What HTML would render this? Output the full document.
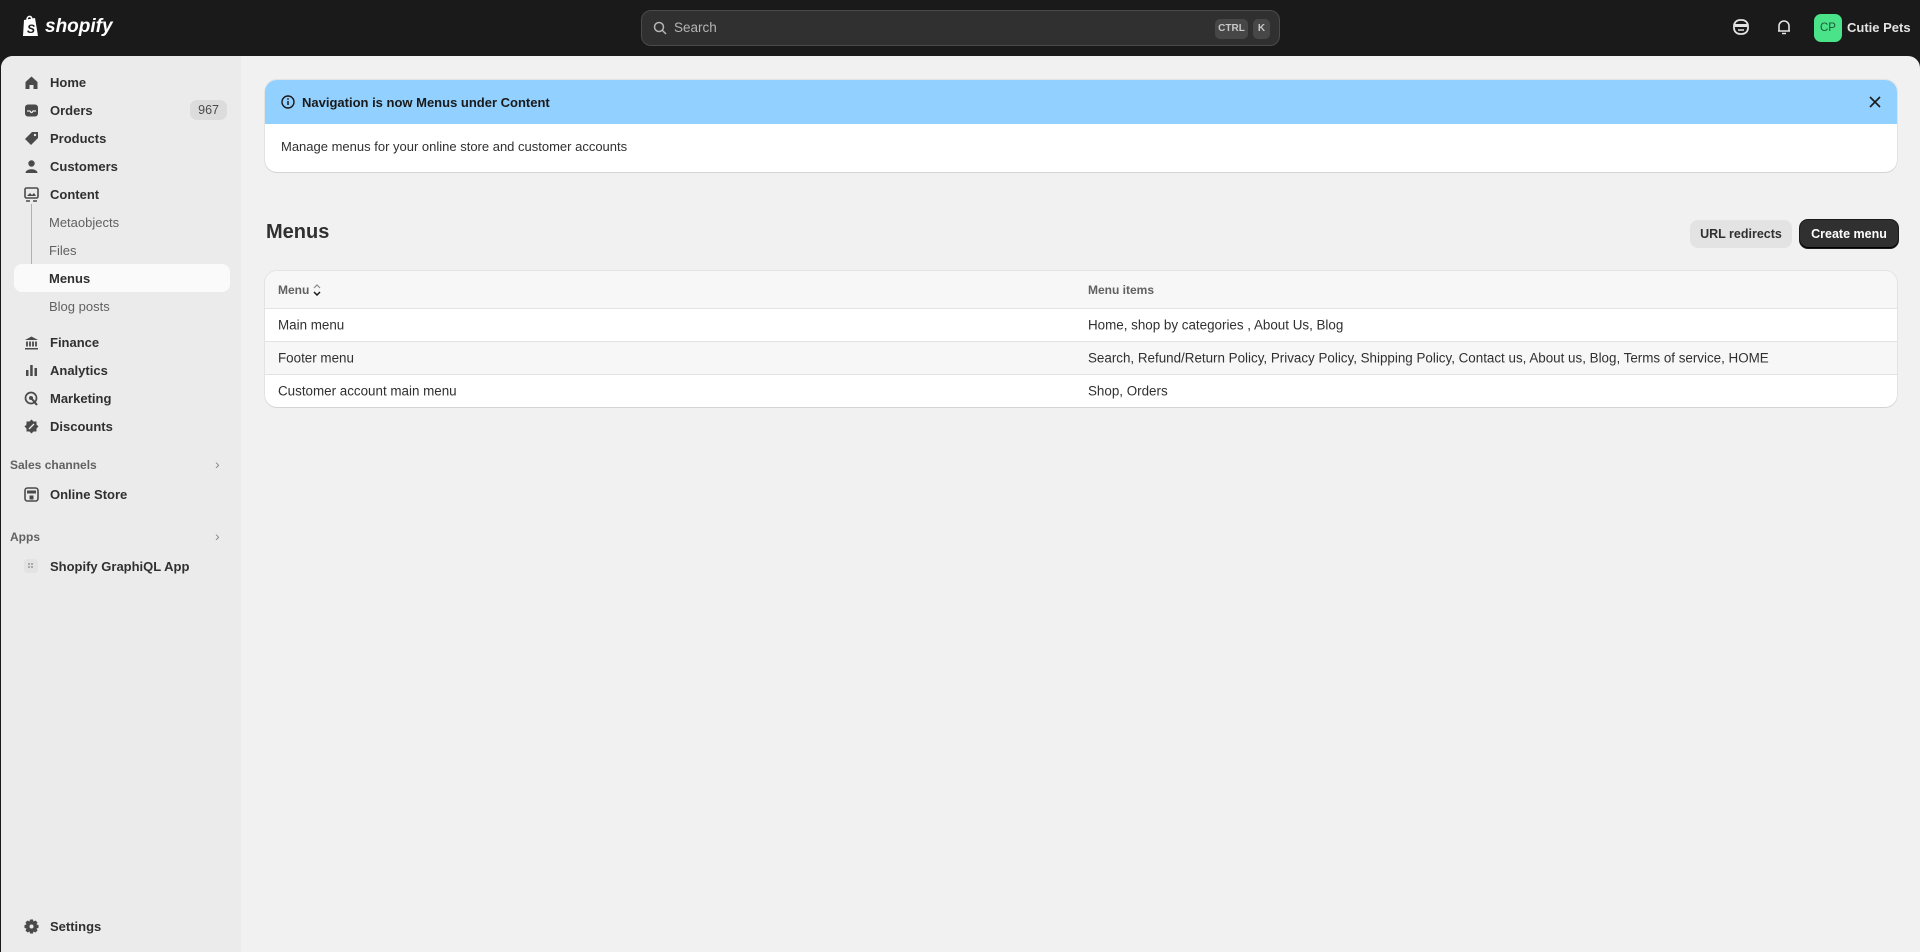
<!DOCTYPE html>
<html><head><meta charset="utf-8"><style>
*{box-sizing:border-box;margin:0;padding:0}
body{width:1920px;height:952px;overflow:hidden;background:#1a1a1a;font-family:"Liberation Sans",sans-serif;font-size:13px;color:#303030;position:relative}
.top{position:absolute;left:0;top:0;width:1920px;height:56px;background:#1a1a1a}
.logo{position:absolute;left:21px;top:15px;color:#fff;font-weight:bold;font-style:italic;font-size:19px;display:flex;align-items:center;gap:4px}
.search{position:absolute;left:641px;top:10px;width:639px;height:36px;background:#303030;border:1px solid #4a4a4a;border-radius:10px;color:#b5b5b5;font-size:13.5px}
.search .t{position:absolute;left:32px;top:9px}
.kbd{position:absolute;top:8px;height:20px;background:#474747;border-radius:5px;color:#c8c8c8;font-size:10px;font-weight:bold;line-height:20px;text-align:center}
.frame{position:absolute;left:1px;top:56px;width:1919px;height:896px;background:#f1f1f1;border-radius:12px 12px 0 0;overflow:hidden}
.side{position:absolute;left:0;top:0;width:240px;height:896px;background:#ebebeb}
.nav{position:absolute;left:13px;width:216px;height:28px;display:flex;align-items:center;font-weight:bold;color:#303030}
.nav .ic{width:16px;height:16px;margin-left:9px;margin-right:11px;display:flex;align-items:center;justify-content:center}
.sub{position:absolute;left:48px;color:#616161;font-weight:normal}
.sec{position:absolute;left:9px;color:#616161;font-weight:bold;font-size:12px}
.chev{position:absolute;left:214px;color:#8a8a8a;font-size:14px}
.card{position:absolute;background:#fff;border-radius:12px;box-shadow:0 1px 0 #d4d4d4,0 0 0 1px #e3e3e3;overflow:hidden}
.row{position:absolute;left:0;width:1632px;border-top:1px solid #e3e3e3;font-size:13.4px}
.row span{position:absolute;top:50%;transform:translateY(-50%)}
</style></head><body>
<div class="top">
 <div class="logo"><svg width="20" height="23" viewBox="0 0 20 23"><path d="M3 5 L14 3 L17 21 L2 21 Z" fill="#fff"/><path d="M6 5 C6 1 10 0 11 4" stroke="#fff" stroke-width="1.5" fill="none"/><text x="6" y="18" font-size="12" font-weight="bold" fill="#1a1a1a" font-family="Liberation Sans">S</text></svg>shopify</div>
 <div class="search"><svg style="position:absolute;left:11px;top:10px" width="14" height="14" viewBox="0 0 14 14"><circle cx="6" cy="6" r="4.5" stroke="#b5b5b5" stroke-width="1.5" fill="none"/><path d="M9.5 9.5 L13 13" stroke="#b5b5b5" stroke-width="1.5"/></svg><span class="t">Search</span><span class="kbd" style="left:573px;width:33px">CTRL</span><span class="kbd" style="left:611px;width:17px">K</span></div>
 <svg style="position:absolute;left:1732px;top:18px" width="18" height="18" viewBox="0 0 18 18"><rect x="2" y="2" width="14" height="14" rx="6" fill="none" stroke="#e3e3e3" stroke-width="1.8"/><rect x="3" y="6" width="12" height="3" fill="#e3e3e3"/><path d="M6 12 h6" stroke="#e3e3e3" stroke-width="1.5"/></svg>
 <svg style="position:absolute;left:1775px;top:18px" width="18" height="18" viewBox="0 0 18 18"><path d="M4 13 V8 a5 5 0 0 1 10 0 V13 Z M3 13 h12 M7 15.5 h4" fill="none" stroke="#e3e3e3" stroke-width="1.6" stroke-linejoin="round"/></svg>
 <div style="position:absolute;left:1814px;top:14px;width:28px;height:28px;border-radius:7px;background:#4be38a;color:#1a5a35;font-size:11.5px;line-height:28px;text-align:center">CP</div>
 <div style="position:absolute;left:1847px;top:20px;color:#e3e3e3;font-weight:bold;font-size:13px">Cutie Pets</div>
</div>
<div class="frame">
 <div class="side">
  <div class="nav" style="top:12px"><span class="ic"><svg width="15" height="15" viewBox="0 0 15 15"><path d="M1.5 7 L7.5 1.5 L13.5 7 V14 H9.5 V10 H5.5 V14 H1.5Z" fill="#4a4a4a"/></svg></span>Home</div>
  <div class="nav" style="top:40px"><span class="ic"><svg width="15" height="15" viewBox="0 0 15 15"><rect x="1" y="1.5" width="13" height="12" rx="3" fill="#4a4a4a"/><path d="M3 8 h3 l1 1.5 h1 l1 -1.5 h3" stroke="#ebebeb" stroke-width="1.3" fill="none"/></svg></span>Orders<span style="position:absolute;right:3px;background:#dcdcdc;border-radius:7px;padding:3px 8px;font-weight:normal;color:#4a4a4a;font-size:12.5px">967</span></div>
  <div class="nav" style="top:68px"><span class="ic"><svg width="15" height="15" viewBox="0 0 15 15"><path d="M8 1 H14 V7 L7 14 L1 8 Z" fill="#4a4a4a"/><circle cx="11" cy="4" r="1.2" fill="#ebebeb"/></svg></span>Products</div>
  <div class="nav" style="top:96px"><span class="ic"><svg width="15" height="15" viewBox="0 0 15 15"><circle cx="7.5" cy="4.5" r="3.2" fill="#4a4a4a"/><path d="M1.5 14 C1.5 9 13.5 9 13.5 14Z" fill="#4a4a4a"/></svg></span>Customers</div>
  <div class="nav" style="top:124px"><span class="ic"><svg width="15" height="15" viewBox="0 0 15 15"><rect x="1" y="1" width="13" height="10" rx="1.5" fill="none" stroke="#4a4a4a" stroke-width="1.6"/><path d="M3 9 L6 6 L8 8 L10 6 L12 9Z" fill="#4a4a4a"/><path d="M2 14 h4 M9 14 h4" stroke="#4a4a4a" stroke-width="1.5"/></svg></span>Content</div>
  <div style="position:absolute;left:30px;top:148px;width:1px;height:70px;background:#b0b0b0"></div>
  <div style="position:absolute;left:30px;top:218px;width:8px;height:1px;background:#b0b0b0"></div>
  <div class="sub" style="top:159px">Metaobjects</div>
  <div class="sub" style="top:187px">Files</div>
  <div style="position:absolute;left:13px;top:208px;width:216px;height:28px;background:#fafafa;border-radius:8px"></div>
  <div class="sub" style="top:215px;color:#303030;font-weight:bold">Menus</div>
  <div class="sub" style="top:243px">Blog posts</div>
  <div class="nav" style="top:272px"><span class="ic"><svg width="15" height="15" viewBox="0 0 15 15"><path d="M1 5 L7.5 1.5 L14 5Z M1 13 h13 v1.5 h-13Z" fill="#4a4a4a"/><path d="M3 6.5 v5 M6 6.5 v5 M9 6.5 v5 M12 6.5 v5" stroke="#4a4a4a" stroke-width="1.8"/></svg></span>Finance</div>
  <div class="nav" style="top:300px"><span class="ic"><svg width="15" height="15" viewBox="0 0 15 15"><rect x="2" y="7" width="2.5" height="6" fill="#4a4a4a"/><rect x="6.2" y="2" width="2.5" height="11" fill="#4a4a4a"/><rect x="10.5" y="5" width="2.5" height="8" fill="#4a4a4a"/></svg></span>Analytics</div>
  <div class="nav" style="top:328px"><span class="ic"><svg width="15" height="15" viewBox="0 0 15 15"><circle cx="7" cy="7" r="5.5" fill="none" stroke="#4a4a4a" stroke-width="1.7"/><circle cx="7" cy="7" r="2" fill="#4a4a4a"/><path d="M8 8 L13 14" stroke="#4a4a4a" stroke-width="2"/></svg></span>Marketing</div>
  <div class="nav" style="top:356px"><span class="ic"><svg width="15" height="15" viewBox="0 0 15 15"><path d="M7.5 0.5 L9.5 2.5 L12.5 2.5 L12.5 5.5 L14.5 7.5 L12.5 9.5 L12.5 12.5 L9.5 12.5 L7.5 14.5 L5.5 12.5 L2.5 12.5 L2.5 9.5 L0.5 7.5 L2.5 5.5 L2.5 2.5 L5.5 2.5Z" fill="#4a4a4a"/><path d="M5 10 L10 5" stroke="#ebebeb" stroke-width="1.3"/></svg></span>Discounts</div>
  <div class="sec" style="top:402px">Sales channels</div><div class="chev" style="top:400px">›</div>
  <div class="nav" style="top:424px"><span class="ic"><svg width="15" height="15" viewBox="0 0 15 15"><rect x="1" y="1" width="13" height="13" rx="2.5" fill="none" stroke="#4a4a4a" stroke-width="1.6"/><rect x="3" y="3.5" width="9" height="3" fill="#4a4a4a"/><rect x="5.5" y="8.5" width="4" height="4" fill="#4a4a4a"/></svg></span>Online Store</div>
  <div class="sec" style="top:474px">Apps</div><div class="chev" style="top:472px">›</div>
  <div class="nav" style="top:496px"><span class="ic"><svg width="14" height="14" viewBox="0 0 14 14"><rect x="0" y="0" width="14" height="14" rx="3" fill="#e3e3e3"/><rect x="4" y="4" width="2" height="2" fill="#aaa"/><rect x="7" y="4" width="2" height="2" fill="#aaa"/><rect x="4" y="7" width="2" height="2" fill="#aaa"/><rect x="7" y="7" width="2" height="2" fill="#aaa"/></svg></span>Shopify GraphiQL App</div>
  <div class="nav" style="top:856px"><span class="ic"><svg width="15" height="15" viewBox="0 0 15 15"><path d="M6 0.5 h3 l0.5 2 l2 -1 l2 2 l-1 2 l2 0.5 v3 l-2 0.5 l1 2 l-2 2 l-2 -1 l-0.5 2 h-3 l-0.5 -2 l-2 1 l-2 -2 l1 -2 l-2 -0.5 v-3 l2 -0.5 l-1 -2 l2 -2 l2 1Z" fill="#4a4a4a"/><circle cx="7.5" cy="7.5" r="2" fill="#ebebeb"/></svg></span>Settings</div>
 </div>
 <div class="card" style="left:264px;top:24px;width:1632px;height:92px">
  <div style="height:44px;background:#91d0ff;position:relative">
   <svg style="position:absolute;left:16px;top:15px" width="14" height="14" viewBox="0 0 14 14"><circle cx="7" cy="7" r="6" fill="none" stroke="#1a1a1a" stroke-width="1.4"/><path d="M7 6 v4" stroke="#1a1a1a" stroke-width="1.5"/><circle cx="7" cy="4" r="0.9" fill="#1a1a1a"/></svg>
   <span style="position:absolute;left:37px;top:15px;font-weight:bold;color:#1a1a1a">Navigation is now Menus under Content</span>
   <svg style="position:absolute;right:16px;top:16px" width="12" height="12" viewBox="0 0 12 12"><path d="M1 1 L11 11 M11 1 L1 11" stroke="#1a1a1a" stroke-width="1.6"/></svg>
  </div>
  <span style="position:absolute;left:16px;top:59px;color:#303030">Manage menus for your online store and customer accounts</span>
 </div>
 <div style="position:absolute;left:265px;top:165px;font-size:20px;font-weight:bold;color:#303030">Menus</div>
 <div style="position:absolute;left:1689px;top:164px;width:102px;height:28px;background:#e3e3e3;border-radius:8px;text-align:center;line-height:28px;font-size:12.5px;color:#303030;font-weight:bold">URL redirects</div>
 <div style="position:absolute;left:1799px;top:164px;width:98px;height:28px;background:#303030;border-radius:8px;text-align:center;line-height:28px;font-size:12.5px;color:#fff;font-weight:bold;box-shadow:inset 0 -1px 0 #000,0 0 0 1px #1a1a1a">Create menu</div>
 <div class="card" style="left:264px;top:215px;width:1632px;height:136px">
  <div class="row" style="top:0;height:37px;background:#f7f7f7;border-top:none"><span style="left:13px;color:#616161;font-size:12px;font-weight:bold">Menu <svg width="8" height="12" viewBox="0 0 8 12" style="vertical-align:middle"><path d="M1 4 L4 1 L7 4" stroke="#888" fill="none" stroke-width="1.2"/><path d="M1 8 L4 11 L7 8" stroke="#1a1a1a" fill="none" stroke-width="1.5"/></svg></span><span style="left:823px;color:#616161;font-size:12px;font-weight:bold">Menu items</span></div>
  <div class="row" style="top:37px;height:33px"><span style="left:13px">Main menu</span><span style="left:823px">Home, shop by categories , About Us, Blog</span></div>
  <div class="row" style="top:70px;height:33px;background:#f7f7f7"><span style="left:13px">Footer menu</span><span style="left:823px">Search, Refund/Return Policy, Privacy Policy, Shipping Policy, Contact us, About us, Blog, Terms of service, HOME</span></div>
  <div class="row" style="top:103px;height:33px"><span style="left:13px">Customer account main menu</span><span style="left:823px">Shop, Orders</span></div>
 </div>
</div>
</body></html>
